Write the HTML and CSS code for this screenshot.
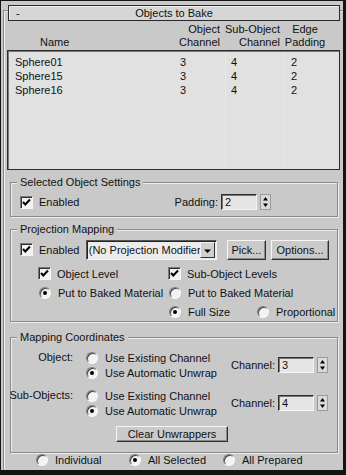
FILE: index.html
```html
<!DOCTYPE html>
<html>
<head>
    <meta charset="utf-8">
    <title>Objects to Bake</title>
    <link rel="stylesheet" href="styles.css">
</head>
<body>
    <div class="panel">
        <div class="rollout">

            <div class="rollout_title">
                <span class="collapse">-</span>
                <span class="title_text">Objects to Bake</span>
            </div>

            <!-- object list -->
            <div class="list_head">
                <div class="head_name">Name</div>
                <div class="head_obj">Object<br>Channel</div>
                <div class="head_sub">Sub-Object<br>Channel</div>
                <div class="head_pad">Edge<br>Padding</div>
            </div>
            <div class="list_body">
                <div class="list_row"><span class="cell_name">Sphere01</span><span class="cell_obj">3</span><span class="cell_sub">4</span><span class="cell_pad">2</span></div>
                <div class="list_row"><span class="cell_name">Sphere15</span><span class="cell_obj">3</span><span class="cell_sub">4</span><span class="cell_pad">2</span></div>
                <div class="list_row"><span class="cell_name">Sphere16</span><span class="cell_obj">3</span><span class="cell_sub">4</span><span class="cell_pad">2</span></div>
            </div>

            <!-- selected object settings -->
            <fieldset class="group group_selected">
                <legend>Selected Object Settings</legend>
                <div class="row">
                    <span class="check_label"><span class="checkbox"><svg width="11" height="11" viewBox="0 0 11 11"><path d="M2 5 L4.3 7.5 L9 2.5" fill="none" stroke="#000" stroke-width="2"/></svg></span>Enabled</span>
                    <span class="spin_group">
                        <span class="spin_label">Padding:</span>
                        <span class="spin_field">2</span>
                        <span class="spin_arrows"><svg width="11" height="16" viewBox="0 0 11 16"><rect x="0.5" y="0.5" width="10" height="15" fill="#dadada" stroke="#9a9a9a"/><path d="M5.5 3 L8 6.5 L3 6.5 Z" fill="#000"/><path d="M3 9.5 L8 9.5 L5.5 13 Z" fill="#000"/></svg></span>
                    </span>
                </div>
            </fieldset>

            <!-- projection mapping -->
            <fieldset class="group group_projection">
                <legend>Projection Mapping</legend>
                <div class="row row_tall">
                    <span class="check_label enabled_label"><span class="checkbox"><svg width="11" height="11" viewBox="0 0 11 11"><path d="M2 5 L4.3 7.5 L9 2.5" fill="none" stroke="#000" stroke-width="2"/></svg></span>Enabled</span>
                    <span class="dropdown">
                        <span class="dropdown_text">(No Projection Modifier)</span>
                        <span class="dropdown_btn"><svg width="13" height="16" viewBox="0 0 13 16"><path d="M3 6.5 H10 L6.5 10 Z" fill="#000"/></svg></span>
                    </span>
                    <span class="button btn_pick">Pick...</span>
                    <span class="button btn_options">Options...</span>
                </div>
                <div class="levels">
                    <span class="check_label"><span class="checkbox"><svg width="11" height="11" viewBox="0 0 11 11"><path d="M2 5 L4.3 7.5 L9 2.5" fill="none" stroke="#000" stroke-width="2"/></svg></span>Object Level</span>
                    <span class="check_label"><span class="checkbox"><svg width="11" height="11" viewBox="0 0 11 11"><path d="M2 5 L4.3 7.5 L9 2.5" fill="none" stroke="#000" stroke-width="2"/></svg></span>Sub-Object Levels</span>
                    <span class="radio_label radio_indent"><span class="radio on"></span>Put to Baked Material</span>
                    <span class="radio_label radio_indent"><span class="radio"></span>Put to Baked Material</span>
                    <span></span>
                    <span class="size_opts radio_indent">
                        <span class="radio_label size_full"><span class="radio on"></span>Full Size</span>
                        <span class="radio_label"><span class="radio"></span>Proportional</span>
                    </span>
                </div>
            </fieldset>

            <!-- mapping coordinates -->
            <fieldset class="group group_mapping">
                <legend>Mapping Coordinates</legend>
                <div class="map_block">
                    <span class="map_label">Object:</span>
                    <span class="map_radios">
                        <span class="radio_label"><span class="radio"></span>Use Existing Channel</span>
                        <span class="radio_label"><span class="radio on"></span>Use Automatic Unwrap</span>
                    </span>
                    <span class="spin_group">
                        <span class="spin_label">Channel:</span>
                        <span class="spin_field">3</span>
                        <span class="spin_arrows"><svg width="11" height="16" viewBox="0 0 11 16"><rect x="0.5" y="0.5" width="10" height="15" fill="#dadada" stroke="#9a9a9a"/><path d="M5.5 3 L8 6.5 L3 6.5 Z" fill="#000"/><path d="M3 9.5 L8 9.5 L5.5 13 Z" fill="#000"/></svg></span>
                    </span>
                </div>
                <div class="map_block">
                    <span class="map_label">Sub-Objects:</span>
                    <span class="map_radios">
                        <span class="radio_label"><span class="radio"></span>Use Existing Channel</span>
                        <span class="radio_label"><span class="radio on"></span>Use Automatic Unwrap</span>
                    </span>
                    <span class="spin_group">
                        <span class="spin_label">Channel:</span>
                        <span class="spin_field">4</span>
                        <span class="spin_arrows"><svg width="11" height="16" viewBox="0 0 11 16"><rect x="0.5" y="0.5" width="10" height="15" fill="#dadada" stroke="#9a9a9a"/><path d="M5.5 3 L8 6.5 L3 6.5 Z" fill="#000"/><path d="M3 9.5 L8 9.5 L5.5 13 Z" fill="#000"/></svg></span>
                    </span>
                </div>
                <span class="button btn_clear">Clear Unwrappers</span>
            </fieldset>

            <div class="bake_scope">
                <span class="radio_label"><span class="radio"></span>Individual</span>
                <span class="radio_label"><span class="radio on"></span>All Selected</span>
                <span class="radio_label"><span class="radio"></span>All Prepared</span>
            </div>

        </div>
    </div>
</body>
</html>
```

FILE: styles.css
```css
body {
    margin:0;
    background:#141414;
}

.panel {
    display:flex;
    flex-direction:column;
    width:346px;
    height:475px;
    box-sizing:border-box;
    border-style:solid;
    border-color:#141414;
    border-width:1px 3px 5px 1px;
    background:#c9c9c9;
    font-family:"Liberation Sans", Arial, sans-serif;
    font-size:11px;
    line-height:14px;
    color:#111;
    overflow:hidden;
}

.rollout {
    flex:1;
    margin:9px 0 0 2px;
    border-top:1px solid #8a8a8a;
    border-left:1px solid #8a8a8a;
    box-shadow:inset 1px 1px #ececec;
}

.rollout_title {
    display:grid;
    grid-template-columns:1fr auto 1fr;
    align-items:center;
    height:16px;
    box-sizing:border-box;
    margin:-6px 3px 0 4px;
    border:1px solid #2a2a2a;
    background:#d6d6d6;
    box-shadow:inset 1px 1px #efefef;
}
    .rollout_title .collapse {
        padding-left:7px;
    }

/* list */
.list_head,
.list_row {
    display:grid;
    grid-template-columns:168px 50px 58px 1fr;
    white-space:nowrap;
}

.list_head {
    height:29px;
    box-sizing:border-box;
    margin:0 3px;
    padding-bottom:1px;
    line-height:13px;
    align-items:end;
}
    .list_head .head_name {
        padding-left:33px;
    }
    .list_head .head_obj {
        text-align:right;
        padding-right:5px;
    }
    .list_head .head_sub {
        text-align:right;
        padding-right:3px;
    }
    .list_head .head_pad {
        text-align:center;
        padding-right:13px;
    }

.list_body {
    height:120px;
    box-sizing:border-box;
    margin:0 3px;
    padding-top:4px;
    border:1px solid #2c2c2c;
    box-shadow:inset 1px 1px #7a7a7a;
    background:#e1e1e1;
    background-image:linear-gradient(#e9e9e9, #e9e9e9), linear-gradient(#e9e9e9, #e9e9e9);
    background-size:1px 100%;
    background-position:217px 0, 275px 0;
    background-repeat:no-repeat;
}
    .list_row {
        height:14px;
        grid-template-columns:167px 50px 58px 1fr;
    }
    .list_row .cell_name { padding-left:7px; }
    .list_row .cell_obj { padding-left:5px; }
    .list_row .cell_sub { padding-left:6px; }
    .list_row .cell_pad { padding-left:8px; }

/* groups */
.group {
    min-width:0;
    margin:5px 5px 0 6px;
    padding:5px 8px 6px 6px;
    border:1px solid #8a8a8a;
    box-shadow:1px 1px #ededed, inset 1px 1px #ededed;
}
    .group legend {
        padding:0 3px;
        background:#c9c9c9;
        line-height:14px;
    }

.row {
    display:flex;
    align-items:center;
    height:16px;
    padding-left:3px;
}

.row_tall {
    height:21px;
}

.check_label,
.radio_label {
    display:flex;
    align-items:center;
    white-space:nowrap;
}

.checkbox {
    display:inline-flex;
    align-items:center;
    justify-content:center;
    flex:none;
    width:13px;
    height:13px;
    box-sizing:border-box;
    margin-right:6px;
    border:1px solid;
    border-color:#7a7a7a #f6f6f6 #f6f6f6 #7a7a7a;
    box-shadow:inset 1px 1px #2e2e2e;
    background:#f3f3f3;
}

.radio {
    display:inline-flex;
    align-items:center;
    justify-content:center;
    flex:none;
    width:12px;
    height:12px;
    box-sizing:border-box;
    margin-right:7px;
    border-radius:50%;
    border:1px solid;
    border-color:#7c7c7c #f8f8f8 #f8f8f8 #7c7c7c;
    box-shadow:inset 1px 1px #444;
    background:#f3f3f3;
}
    .radio.on::after {
        content:"";
        width:4px;
        height:4px;
        border-radius:50%;
        background:#000;
    }

.spin_group {
    display:flex;
    align-items:center;
    margin-left:auto;
    white-space:nowrap;
}

.group_selected .spin_group {
    margin-right:58px;
}

.spin_label {
    margin-right:3px;
}

.spin_field {
    width:36px;
    height:16px;
    box-sizing:border-box;
    padding-left:3px;
    border:1px solid;
    border-color:#2e2e2e #f4f4f4 #f4f4f4 #2e2e2e;
    box-shadow:inset 1px 1px #777;
    background:#e5e5e5;
    line-height:14px;
}

.spin_arrows {
    display:flex;
    margin-left:3px;
}

/* projection mapping */
.group_projection {
    padding-top:3px;
    padding-bottom:0;
}

.enabled_label {
    width:67px;
}

.dropdown {
    display:flex;
    width:131px;
    height:20px;
    box-sizing:border-box;
    border:1px solid;
    border-color:#555 #f4f4f4 #f4f4f4 #555;
    box-shadow:inset 1px 1px #222;
    background:#ececec;
}
    .dropdown_text {
        flex:1;
        overflow:hidden;
        white-space:nowrap;
        padding:2px 0 0 2px;
    }
    .dropdown_btn {
        display:flex;
        margin:1px 1px 1px 0;
        border:1px solid;
        border-color:#f4f4f4 #333 #333 #f4f4f4;
        background:#d0d0d0;
    }

.button {
    display:flex;
    align-items:center;
    justify-content:center;
    height:20px;
    box-sizing:border-box;
    border:1px solid;
    border-color:#f6f6f6 #303030 #303030 #f6f6f6;
    box-shadow:inset -1px -1px #8a8a8a;
    background:#cacaca;
    white-space:nowrap;
}

.btn_pick {
    width:40px;
    margin-left:10px;
}

.btn_options {
    width:59px;
    margin-left:5px;
}

.levels {
    display:grid;
    grid-template-columns:130px 1fr;
    grid-auto-rows:19px;
    align-items:center;
    margin-top:4px;
    padding-left:21px;
}
    .levels .radio_indent {
        margin-left:1px;
    }

.size_opts {
    display:flex;
}
    .size_opts .size_full {
        width:88px;
    }

/* mapping coordinates */
.group_mapping {
    margin-top:8px;
    padding-top:6px;
    padding-bottom:10px;
}

.map_block {
    display:grid;
    grid-template-columns:69px 1fr auto;
    margin-bottom:8px;
}
    .map_block .map_label {
        display:flex;
        justify-content:flex-end;
        white-space:nowrap;
        padding-right:13px;
        line-height:15px;
    }
    .map_block .map_radios {
        display:flex;
        flex-direction:column;
    }
    .map_block .radio_label {
        height:15px;
    }
    .map_block .spin_group {
        margin-right:1px;
    }

.btn_clear {
    width:112px;
    height:16px;
    margin:7px auto 0;
    position:relative;
    left:-1px;
}

.bake_scope {
    display:grid;
    grid-template-columns:93px 94px 1fr;
    margin-top:0;
    padding-left:32px;
    height:14px;
}
```
